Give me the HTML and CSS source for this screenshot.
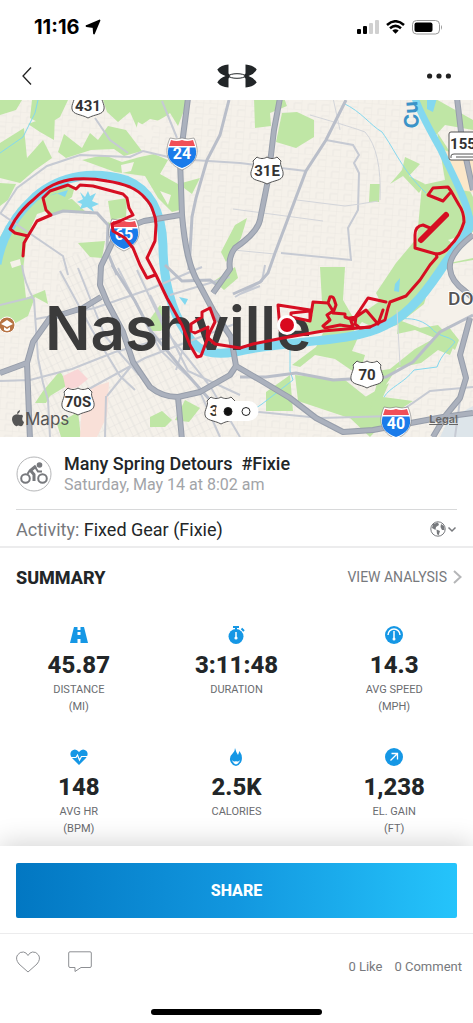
FILE: index.html
```html
<!DOCTYPE html>
<html lang="en">
<head>
    <meta charset="UTF-8">
    <meta name="viewport" content="width=device-width, initial-scale=1.0">
    <title>Many Spring Detours #Fixie</title>
    <link rel="stylesheet" href="styles.css">
</head>
<body>
    <div class="status-bar">
        <div class="status-time">
            <span>11:16</span>
            <svg width="16" height="16" viewBox="0 0 16 16"><path d="M14.500 1.500L9 14.500L8.500 8L1.500 7Z" fill="#000" stroke="#000" stroke-width="1.800" stroke-linejoin="round"/></svg>
        </div>
        <div class="status-icons">
            <svg width="22" height="15" viewBox="0 0 22 15">
                <rect x="0" y="9" width="4" height="5" rx="1"/>
                <rect x="6" y="6" width="4" height="8" rx="1"/>
                <rect x="12" y="3" width="4" height="11" rx="1" fill="#d0d0d0"/>
                <rect x="18" y="0" width="4" height="14" rx="1" fill="#d0d0d0"/>
            </svg>
            <svg width="19" height="14" viewBox="0 0 19 14" fill="none" stroke="#000" stroke-width="2.500">
                <path d="M1 5Q9.500-2.500 18 5M4 8.300Q9.500 3.500 15 8.300"/>
                <path d="M6.300 10.500Q9.500 8 12.700 10.500L9.500 13.800Z" fill="#000" stroke="none"/>
            </svg>
            <svg width="31" height="15" viewBox="0 0 31 15">
                <rect x=".5" y=".5" width="27" height="13.500" rx="4" fill="none" stroke="#999"/>
                <rect x="2.500" y="2.500" width="18" height="9.500" rx="2"/>
                <path d="M29 5Q31 7 29 10Z" fill="#999"/>
            </svg>
        </div>
    </div>

    <header class="nav-bar">
        <button class="icon-button" aria-label="Back">
            <svg width="10" height="18" viewBox="0 0 10 18" fill="none" stroke="#222" stroke-width="1.300"><path d="M9 .5L1 9L9 17.500"/></svg>
        </button>
        <svg class="logo" width="40" height="24" viewBox="0 0 40 24">
            <path d="M11.500 .5Q4 1 .3 5.500Q2.500 10 8.500 12Q2.500 14 .3 18.500Q4 23 11.500 23.500V14.500L14 12L11.500 9.500ZM28.500 .5Q36 1 39.700 5.500Q37.500 10 31.500 12Q37.500 14 39.700 18.500Q36 23 28.500 23.500V14.500L26 12L28.500 9.500Z" fill="#222628"/>
            <ellipse cx="20" cy="12" rx="8" ry="2.300" fill="#fff" stroke="#222628" stroke-width="1"/>
        </svg>
        <button class="icon-button" aria-label="More">
            <svg width="24" height="6" viewBox="0 0 24 6" fill="#222"><circle cx="2.600" cy="3" r="2.600"/><circle cx="12" cy="3" r="2.600"/><circle cx="21.400" cy="3" r="2.600"/></svg>
        </button>
    </header>

    <section class="map">
        <svg class="map-canvas" viewBox="0 100 473 337" preserveAspectRatio="xMidYMid slice">
            <defs>
                <pattern id="streets" width="14" height="11" patternUnits="userSpaceOnUse" patternTransform="rotate(4)">
                    <path d="M0 0H14M0 0V11M7 5H14M7 5V11" stroke="#e7e4df" stroke-width=".7" fill="none"/>
                </pattern>
                <pattern id="downtown" width="12" height="9" patternUnits="userSpaceOnUse" patternTransform="rotate(-26)">
                    <path d="M0 0H12M0 0V9M6 0V9" stroke="#e1dfdc" stroke-width=".8" fill="none"/>
                </pattern>
                <g id="us-shield">
                    <path d="M-14 -9L-10 -13C-7 -11-3 -11 0 -13C3 -11 7 -11 10 -13L14 -9C12 -5 17 0 16 5C15 11 7 10 0 14C-7 10-15 11-16 5C-17 0-12-5-14 -9Z" fill="#fff" stroke="#555" stroke-width="1"/>
                </g>
                <g id="interstate">
                    <path d="M-12 -14Q-6 -12 0 -14Q6 -12 12 -14C18 0 16 11 0 18C-16 11-18 0-12 -14Z" fill="#fff" stroke="#777" stroke-width=".6"/>
                    <path d="M-11 -12Q-5 -10 0 -12Q5 -10 11 -12L13 -6H-13Z" fill="#f04f58"/>
                    <path d="M-13.500 -4.500H13.500C16 6 11 12 0 16C-11 12-16 6-13.500 -4.500Z" fill="#1a7bea"/>
                </g>
            </defs>

            <rect x="0" y="100" width="473" height="337" fill="#f5f1ea"/>
            <rect x="0" y="100" width="473" height="337" fill="url(#streets)"/>
            <path d="M60 260L150 230L190 340L240 365L220 437H30V370L60 310Z" fill="#f5f1ea"/>
            <path d="M60 260L150 230L190 340L240 365L220 437H30V370L60 310Z" fill="url(#downtown)"/>

            <!-- parks -->
            <g fill="#bfe6a5">
                <path d="M0 100H22L16 110L0 115ZM32 100H68L60 117L45 126L30 118ZM0 143L24 128L27 158L43 140L52 158L35 170L20 183L0 178ZM0 183L16 184L8 200L0 206ZM28 124L55 114L54 140L40 132Z"/>
                <path d="M103 100H188L178 126L170 113L160 121L150 119L137 128L130 112L118 122L107 112ZM108 126L126 130L142 151L124 156L114 149L91 150L66 158L58 152L64 134L82 148L90 133L98 140Z"/>
                <path d="M82 160L104 155L122 162L140 157L154 154L168 160L160 174L178 184L200 178L192 194L184 188L180 210L172 212L158 198L145 176L115 172Z"/>
                <path d="M0 237L18 208L38 193L53 187L75 186L72 197L58 207L37 214L27 236L23 270L26 298L45 290L48 304L35 297L28 316L12 325L0 319Z"/>
                <path d="M44 203L72 199L88 214L65 210L48 217ZM108 201L127 198L126 217L111 220ZM108 222L124 231L118 239L108 230ZM78 243L105 241L102 258L90 257Z"/>
                <path d="M254 98H284L287 106L270 113L271 126L255 128ZM282 113L297 112L314 120L314 137L296 148L276 142ZM370 184H380L379 202H369ZM405 157L420 164L409 176L425 184L419 193L403 176L390 184L402 170Z"/>
                <path d="M419 98H434L473 120V130L445 125L435 136L428 120L419 112ZM437 132L452 155L473 197V260L444 265L430 283L424 304L397 325L380 330L362 322L350 335L320 332L300 330L305 323L313 314V302H322L320 267H345L343 300L354 319L380 301L376 293L396 263L417 238L422 185L445 180Z"/>
                <path d="M295 375L345 380L370 400L372 417L352 419L298 401ZM266 392L290 375L293 411L266 411ZM360 400L389 383L383 397L413 401L390 416L370 437L350 418ZM448 326L459 340L455 350L439 337Z"/>
                <path d="M323 333H360L352 351L365 355L360 372L351 370L335 359L315 355L300 367L292 365L316 347ZM399 320L420 328L438 325L455 343L450 355L438 350L421 363L397 368L370 409L377 383L365 373L390 369L415 349L435 338L415 330L397 334Z"/>
                <path d="M43 391L60 371L68 385L50 396L46 403L35 403ZM150 417L162 411L172 420L165 427H150ZM175 420L185 400L200 408L189 422ZM150 319L160 305L170 317L161 331H150ZM214 281L235 267L238 278L224 290ZM57 424L78 412L81 437H61ZM235 225L247 218L241 238L226 262L221 252Z"/>
            </g>
            <!-- clearings in the parks -->
            <path d="M138 122L154 131L150 143L136 130ZM152 124L166 116L163 128ZM121 165L134 162L131 171L122 173ZM10 262L20 259L21 265L12 268ZM80 105L100 103L96 122L84 118ZM160 191L171 195L168 205ZM448 240L473 232V258L440 265L458 248ZM438 290L473 275V318L452 325L420 318Z" fill="#f5f1ea"/>
            <path d="M63 376L78 369L88 379L78 387L66 390Z" fill="#f9d6d6"/>
            <path d="M83 390L109 382L107 416L97 437H80Z" fill="#f9e0d8"/>
            <path d="M444 150L473 160V192L460 190Z" fill="#fbe7c9"/>
            <path d="M448 420L473 406V437H440Z" fill="#dde5ea"/>

            <!-- water -->
            <g fill="none" stroke="#83d8ef">
                <path d="M-3 264C1 240 12 218 35 197C62 174 95 171 126 180C151 190 162 212 163 246C163 275 170 310 186 332C195 350 208 356 235 352C290 339 350 344 386 325C411 314 431 285 446 262C462 240 472 230 470 217" stroke-width="9"/>
                <path d="M470 220C466 198 450 170 441 150C430 130 421 115 415 98" stroke-width="7"/>
                <path d="M38 100L35 113L23 137L0 153" stroke-width="1"/>
                <path d="M343 103C362 112 370 125 382 132C395 150 402 170 426 193" stroke-width="1"/>
                <path d="M384 397C390 387 404 383 414 370L437 367C442 353 449 350 455 342C448 335 439 338 430 327C420 319 411 318 399 319" stroke-width="1"/>
                <path d="M290 345V371L293 380L262 404L250 412" stroke-width="1"/>
            </g>
            <path d="M80 192L85 197L88 191L90 196L96 193L92 201L99 204L92 207L94 212L87 207L80 209L82 204L77 202L83 199ZM49 196L68 190L65 197L56 193ZM427 98H437L433 112L427 109ZM179 297L188 299L185 305ZM395 284L400 278L399 292L394 291Z" fill="#83d8ef"/>

            <!-- secondary roads -->
            <g class="road-minor">
                <path d="M0 214L17 188L47 166L80 155L130 157L143 151L177 159L240 163L306 171M95 118L110 140L128 153M0 213L63 256L68 275M162 101L177 138"/>
                <path d="M281 253L351 260L348 228L358 210L359 173L354 163L359 155L353 145L326 140"/>
                <path d="M22 265Q24 282 34 300L38 358L43 383L48 400L50 437M0 381L30 380L72 369L115 352L165 338M0 305L33 297M36 319L95 308L150 289L202 267M78 395L145 358L240 322M107 396L132 365M60 271L92 330L120 376L135 390M78 268L105 336L139 375"/>
                <path d="M118 268L160 350L197 385L220 437M137 270L165 330L210 386L240 437M150 295L188 371L240 395M240 410L320 418L394 416L430 391L473 387M105 437L106 396M170 295L230 277M186 340L176 370M265 265L262 281L235 297M240 294L260 286M455 437L460 400"/>
            </g>
            <path class="road-faint" d="M297 200L345 206L360 204L378 201M310 115Q355 128 365 132Q382 151 380 200M233 209L323 221M397 310L400 365M333 98L340 130M233 250L275 254"/>
            <g class="road-medium">
                <path d="M229 100L220 135L207 160L196 198L192 217L189 270M346 100L326 140L306 171L275 253L268 273L260 282L233 294M51 215L63 211L97 213L108 225L107 251L117 275"/>
                <path d="M240 377H266L296 373L333 380L386 377L413 362L440 332L473 315M112 265L135 301L150 330L178 364L210 400M165 265L182 281L210 280L220 287"/>
            </g>

            <!-- highways -->
            <g class="highway-edge">
                <path d="M188 98L180 160L182 215C185 250 190 270 199 284L214 312L231 337L236 366L260 380L290 398L316 418L343 432L373 430L443 417L473 413M180 215L144 221C128 226 120 233 113 241L101 266L100 285L107 302L123 332L133 362L150 387Q162 397 178 397L200 392L230 375L236 366M178 397L182 440M101 297L83 308L50 318L33 342L27 363L0 373M27 363L30 440"/>
                <path d="M280 98L274 130L268 180L260 220Q257 233 235 248Q228 257 230 269L213 293M457 98L462 140L473 190M473 235Q448 254 450 269Q451 281 465 291L473 298M470 318L460 355L466 378L460 398L446 415L433 437"/>
            </g>
            <g class="highway">
                <path d="M188 98L180 160L182 215C185 250 190 270 199 284L214 312L231 337L236 366L260 380L290 398L316 418L343 432L373 430L443 417L473 413M180 215L144 221C128 226 120 233 113 241L101 266L100 285L107 302L123 332L133 362L150 387Q162 397 178 397L200 392L230 375L236 366M178 397L182 440M101 297L83 308L50 318L33 342L27 363L0 373M27 363L30 440"/>
                <path d="M280 98L274 130L268 180L260 220Q257 233 235 248Q228 257 230 269L213 293M457 98L462 140L473 190M473 235Q448 254 450 269Q451 281 465 291L473 298M470 318L460 355L466 378L460 398L446 415L433 437"/>
            </g>

            <!-- labels -->
            <text x="45" y="350" class="city-label">Nashville</text>
            <text x="448" y="305" class="area-label">DO</text>
            <text transform="translate(419 128) rotate(-94)" class="river-label">Cu</text>
            <circle cx="7" cy="325" r="8" fill="#b77343" stroke="#fff"/>
            <path d="M1 324L7 320L13 324L7 327ZM4 327V330Q7 332 10 330V327L7 329Z" fill="#fff"/>

            <use href="#us-shield" x="88" y="104"/><text x="88" y="111" class="shield-text">431</text>
            <use href="#us-shield" x="267" y="170"/><text x="267" y="176" class="shield-text">31E</text>
            <use href="#us-shield" x="78" y="401"/><text x="78" y="407" class="shield-text">70S</text>
            <use href="#us-shield" x="367" y="374"/><text x="367" y="380" class="shield-text">70</text>
            <use href="#us-shield" x="221" y="410"/><text x="214" y="416" class="shield-text">3</text>
            <rect x="449" y="132" width="34" height="28" rx="2" fill="#fff" stroke="#555"/>
            <path d="M451 158V156Q451 154 454 154H473M456 157H473" stroke="#555" fill="none"/>
            <text x="463" y="149" class="shield-text">155</text>
            <use href="#interstate" x="182" y="152"/><text x="182" y="159" class="interstate-text">24</text>
            <use href="#interstate" x="124" y="233"/><text x="124" y="240" class="interstate-text">65</text>
            <use href="#interstate" x="396" y="421"/><text x="396" y="429" class="interstate-text">40</text>

            <!-- recorded route -->
            <g class="route">
                <path d="M23 256L24 243L28 236L37 221L51 215L46 210L43 198L50 191L68 185L76 189L80 185L93 186L123 194L127 198L129 208L133 215L120 221L112 224L113 231L125 238L133 248L140 265L147 278L155 275"/>
                <path d="M28 236L15 233L10 229L15 220Q23 208 33 200Q43 190 53 185Q64 180 75 179Q92 178 107 181Q120 183 130 187Q139 191 145 198Q151 204 153 211Q156 218 156 225L155 241L147 258L156 275L167 298L182 325L190 345L197 357L201 356L204 348L210 332L215 322L210 308L202 312L202 317L191 324V331L195 333L208 327L207 337L215 344L240 348L253 344L283 338L323 331L370 327L385 320L388 308L390 302L406 296L420 280L430 265L437 257L436 254L415 248V235Q415 226 423 225L430 228"/>
                <path d="M280 330L278 305L310 310M291 317L291 313L310 311V321L291 317ZM310 321L313 302L328 303L330 297Q333 296 334 299L336 305L333 313L345 314V317L353 320L360 310L368 298L386 302M328 303L333 311L327 315L330 320L323 326L325 328L340 325L353 327L350 318L356 317L366 310L378 324L383 310M356 317L355 324L360 328L370 327M436 254Q444 254 450 246Q460 236 464 222Q464 212 459 205L451 191L448 187L433 188L428 195L443 201L450 193"/>
                <path d="M421 240L446 215" class="route-laps"/>
            </g>
            <circle cx="287" cy="325" r="10" fill="#fff"/>
            <circle cx="287" cy="325" r="7" fill="#d9081e"/>

            <path d="M20 415Q16 413 13 416Q11 419 13 423Q15 427 17 426Q18 425 20 426Q23 427 24 422Q21 420 23 416Q22 414 20 415ZM17 414Q17 411 20 410Q20 413 17 414Z" fill="#555"/>
            <text x="25" y="425" class="maps-label">Maps</text>
        </svg>
        <div class="map-pager"><span class="dot dot-active"></span><span class="dot"></span></div>
        <a href="#" class="legal">Legal</a>
    </section>

    <main>
        <section class="workout-header">
            <svg width="36" height="36" viewBox="0 0 36 36" fill="none" stroke="#77797d">
                <circle cx="18" cy="18" r="17" stroke="#b5b6b8"/>
                <circle cx="9.500" cy="22.500" r="4.300" stroke-width="2"/>
                <circle cx="26.500" cy="22.500" r="4.300" stroke-width="2"/>
                <circle cx="23.500" cy="9" r="2.800" fill="#77797d" stroke="none"/>
                <path d="M20 10L14.500 14.500L18 18.500V25" stroke-width="3" stroke-linejoin="round"/>
                <path d="M19 11L22 15.500H26M14 14L11.500 18" stroke-width="2"/>
            </svg>
            <div>
                <h1>Many Spring Detours&nbsp; #Fixie</h1>
                <p class="date">Saturday, May 14 at 8:02 am</p>
            </div>
        </section>

        <section class="activity">
            <p><span class="muted">Activity:</span> Fixed Gear (Fixie)</p>
            <button class="icon-button" aria-label="Privacy">
                <svg width="26" height="16" viewBox="0 0 26 16" fill="none" stroke="#77797d">
                    <circle cx="8" cy="8" r="7.200"/>
                    <path d="M3 3L8 1.500L9 4L6 6L5.500 9L2 7ZM6.500 8.500L10 10L8.500 14.500L7 13ZM11 3L14 5L14.500 9L12 9L10.500 6Z" fill="#77797d" stroke="none"/>
                    <path d="M18.500 6.500L22 10L25.500 6.500" stroke-width="1.500"/>
                </svg>
            </button>
        </section>

        <section class="summary">
            <div class="summary-title">
                <h2>SUMMARY</h2>
                <a href="#">VIEW ANALYSIS
                    <svg width="9" height="14" viewBox="0 0 9 14" fill="none" stroke="#b5b6b8" stroke-width="2"><path d="M1 1L7.500 7L1 13"/></svg>
                </a>
            </div>
            <div class="stats">
                <div class="stat">
                    <svg viewBox="0 0 18 18"><path d="M4 1H14L18 17H0Z" fill="#1597e5"/><path d="M9 1V4M9 6V9M9 13V17" stroke="#fff" stroke-width="3"/></svg>
                    <strong>45.87</strong>
                    <span>DISTANCE</span><span>(MI)</span>
                </div>
                <div class="stat">
                    <svg viewBox="0 0 18 18"><circle cx="9" cy="10.500" r="7.500" fill="#1597e5"/><path d="M6 1H12M9 1V5M14.500 2.500L17 5" stroke="#1597e5" stroke-width="2"/><path d="M9 6V11" stroke="#fff" stroke-width="1.500"/><circle cx="9" cy="12" r="1.600" fill="#fff"/></svg>
                    <strong>3:11:48</strong>
                    <span>DURATION</span>
                </div>
                <div class="stat">
                    <svg viewBox="0 0 18 18"><circle cx="9" cy="9" r="9" fill="#1597e5"/><path d="M3 9A6 6 0 0 1 15 9M9 5V12" stroke="#fff" stroke-width="1.500" fill="none"/><circle cx="9" cy="13" r="1.500" fill="#fff"/></svg>
                    <strong>14.3</strong>
                    <span>AVG SPEED</span><span>(MPH)</span>
                </div>
                <div class="stat">
                    <svg viewBox="0 0 18 18"><path d="M9 17L2 10Q-1 6 1.500 3Q5.500-.5 9 4Q12.500-.5 16.500 3Q19 6 16 10Z" fill="#1597e5"/><path d="M0 9.500H6L7.500 7L9.500 12L11.500 8.500H18" stroke="#fff" stroke-width="1.200" fill="none"/></svg>
                    <strong>148</strong>
                    <span>AVG HR</span><span>(BPM)</span>
                </div>
                <div class="stat">
                    <svg viewBox="0 0 18 18"><path d="M8 0Q9 4 11 7L12.500 3Q16 8 14.500 13Q13 17 9 18Q4 17 3 12Q2.500 8 6 5Q8 3 8 0Z" fill="#1597e5"/><path d="M5 12Q7 14.500 9 13Q11 14.500 13 12Q12.500 15 9 16.500Q5.500 15 5 12Z" fill="#fff"/></svg>
                    <strong>2.5K</strong>
                    <span>CALORIES</span>
                </div>
                <div class="stat">
                    <svg viewBox="0 0 18 18"><circle cx="9" cy="9" r="9" fill="#1597e5"/><path d="M5.500 12.500L12 6M6.500 5.500H12.500V11.500" stroke="#fff" stroke-width="1.300" fill="none"/></svg>
                    <strong>1,238</strong>
                    <span>EL. GAIN</span><span>(FT)</span>
                </div>
            </div>
        </section>
    </main>

    <footer>
        <div class="share">
            <button class="share-button">SHARE</button>
        </div>
        <div class="social">
            <button class="icon-button" aria-label="Like">
                <svg width="24" height="22" viewBox="0 0 24 22" fill="none" stroke="#8d8f93"><path d="M12 21L3 13Q-1 8 1.500 4Q4 .5 7.500 1Q10.500 1.500 12 4.500Q13.500 1.500 16.500 1Q20 .5 22.500 4Q25 8 21 13Z"/></svg>
            </button>
            <button class="icon-button" aria-label="Comment">
                <svg width="24" height="22" viewBox="0 0 24 22" fill="none" stroke="#8d8f93"><path d="M2 .8H22Q23.300 .8 23.300 2V15Q23.300 16.500 22 16.500H13L7 20.500V16.500H2Q.7 16.500 .7 15V2Q.7 .8 2 .8Z"/></svg>
            </button>
            <p><span>0 Like</span><span>0 Comment</span></p>
        </div>
        <div class="home-indicator"></div>
    </footer>
</body>
</html>
```
FILE: styles.css
```css
* {
    box-sizing: border-box;
}
body {
    font-family: Roboto, "Liberation Sans", sans-serif;
    background-color: #fff;
    color: #222628;
    margin: 0;
    min-height: 100vh;
    display: flex;
    flex-direction: column;
}
h1, h2, p {
    margin: 0;
}
svg {
    display: block;
    flex-shrink: 0;
}
.icon-button {
    background: none;
    border: none;
    padding: 0;
    cursor: pointer;
}
.status-bar {
    display: flex;
    justify-content: space-between;
    align-items: center;
    height: 52px;
    padding: 2px 30px 0 34px;
}
.status-time {
    display: flex;
    align-items: center;
    gap: 5px;
    font-family: Inter, sans-serif;
    font-size: 20px;
    font-weight: 700;
    color: #000;
}
.status-icons {
    display: flex;
    align-items: center;
    gap: 7px;
}
.nav-bar {
    display: flex;
    justify-content: space-between;
    align-items: center;
    height: 48px;
    padding: 0 22px;
}
.logo {
    margin-left: 14px;
}

/* Map */
.map {
    position: relative;
    width: 100%;
    aspect-ratio: 473 / 337;
    overflow: hidden;
}
.map-canvas {
    width: 100%;
    height: 100%;
}
.road-minor {
    fill: none;
    stroke: #c6cad3;
    stroke-width: 2;
}
.road-faint {
    fill: none;
    stroke: #d3d5da;
    stroke-width: 1;
}
.road-medium {
    fill: none;
    stroke: #b9bec9;
    stroke-width: 3;
}
.highway-edge {
    fill: none;
    stroke: #979eab;
    stroke-width: 6;
    stroke-linejoin: round;
}
.highway {
    fill: none;
    stroke: #abb1bd;
    stroke-width: 4;
    stroke-linejoin: round;
}
.route {
    fill: none;
    stroke: #d60e22;
    stroke-width: 3;
    stroke-linecap: round;
    stroke-linejoin: round;
}
.route-laps {
    stroke-width: 6;
}
.city-label {
    font-family: Inter, sans-serif;
    font-size: 60px;
    font-weight: 600;
    fill: #3b3b3b;
}
.area-label {
    font-family: Roboto, sans-serif;
    font-size: 19px;
    font-weight: 500;
    fill: #555;
    stroke: #fff;
    stroke-width: 2;
    paint-order: stroke;
}
.river-label {
    font-family: Inter, sans-serif;
    font-size: 20px;
    font-weight: 700;
    fill: #3b93c8;
}
.shield-text, .interstate-text {
    font-family: Roboto, sans-serif;
    font-size: 15px;
    font-weight: 700;
    text-anchor: middle;
    fill: #333;
}
.interstate-text {
    font-size: 16px;
    fill: #fff;
}
.maps-label {
    font-family: Inter, sans-serif;
    font-size: 17px;
    fill: #555;
}
.map-pager {
    position: absolute;
    left: 50%;
    bottom: 16px;
    transform: translateX(-50%);
    display: flex;
    align-items: center;
    gap: 9px;
    height: 20px;
    padding: 0 8px;
    border-radius: 10px;
    background-color: #fff;
}
.dot {
    width: 9px;
    height: 9px;
    border: 1px solid #222;
    border-radius: 50%;
}
.dot-active {
    background-color: #111;
}
.legal {
    position: absolute;
    right: 15px;
    bottom: 11px;
    font-family: Inter, sans-serif;
    font-size: 11px;
    font-weight: 600;
    color: #666;
}

/* Workout */
.workout-header {
    display: flex;
    align-items: center;
    gap: 12px;
    margin: 0 16px;
    height: 73px;
    padding-top: 2px;
    border-bottom: 1px solid #d8d9da;
}
h1 {
    font-size: 18px;
    line-height: 22px;
    font-weight: 500;
}
.date {
    font-size: 16px;
    line-height: 20px;
    color: #a2a4a8;
}
.activity {
    display: flex;
    justify-content: space-between;
    align-items: center;
    height: 38px;
    padding: 2px 17px 0 16px;
    border-bottom: 2px solid #ececed;
    font-size: 18px;
}
.muted {
    color: #77797d;
}
.summary-title {
    display: flex;
    justify-content: space-between;
    align-items: center;
    height: 58px;
    padding: 0 11px 0 16px;
}
h2 {
    font-size: 18px;
    font-weight: 800;
}
.summary-title a {
    display: flex;
    align-items: center;
    gap: 6px;
    font-size: 14px;
    color: #77797d;
    text-decoration: none;
}
.stats {
    display: grid;
    grid-template-columns: repeat(3, 1fr);
    row-gap: 24px;
    padding-top: 20px;
}
.stat {
    display: flex;
    flex-direction: column;
    align-items: center;
    min-height: 98px;
}
.stat svg {
    width: 18px;
    height: 18px;
}
.stat strong {
    font-size: 24px;
    line-height: 28px;
    font-weight: 800;
    margin: 7px 0 2px;
}
.stat span {
    font-size: 11px;
    line-height: 17px;
    color: #6a6c70;
}

/* Bottom panel */
footer {
    margin-top: auto;
    background-color: #fff;
    box-shadow: 0 -4px 24px rgba(0, 0, 0, 0.16);
}
.share {
    padding: 17px 16px 15px;
    border-bottom: 1px solid #ececed;
}
.share-button {
    display: block;
    width: 100%;
    height: 55px;
    border: none;
    border-radius: 2px;
    background: linear-gradient(90deg, #0277c2, #1297df 50%, #25c4fb);
    color: #fff;
    font-family: Roboto, sans-serif;
    font-size: 16px;
    font-weight: 800;
    cursor: pointer;
}
.social {
    display: flex;
    align-items: center;
    gap: 28px;
    height: 56px;
    padding: 0 11px 0 16px;
}
.social p {
    display: flex;
    gap: 12px;
    margin-left: auto;
    padding-top: 8px;
    font-size: 13px;
    color: #77797d;
}
.home-indicator {
    width: 36%;
    height: 6px;
    margin: 19px auto 9px;
    border-radius: 3px;
    background-color: #000;
}
```
